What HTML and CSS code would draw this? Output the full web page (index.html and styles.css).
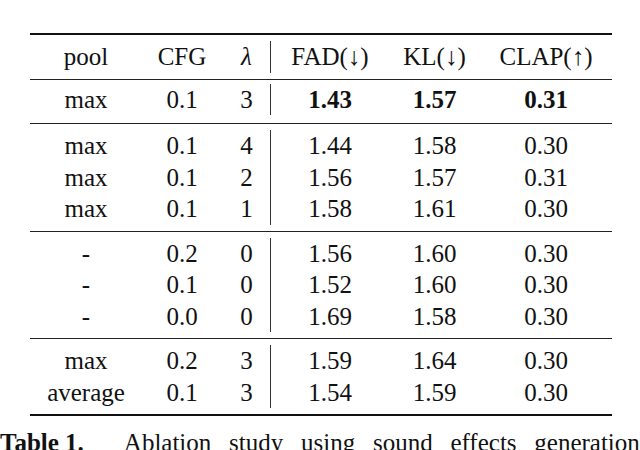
FILE: index.html
```html
<!DOCTYPE html>
<html lang="en">
<head>
    <meta charset="UTF-8">
    <meta name="viewport" content="width=device-width, initial-scale=1.0">
    <title>Table 1 - Ablation study</title>
    <link rel="stylesheet" href="styles.css">
</head>
<body>
    <div class="lead"><span>the sound FAD and KL scores.</span></div>

    <table class="results">
        <colgroup>
            <col class="c-pool">
            <col class="c-cfg">
            <col class="c-lambda">
            <col class="c-fad">
            <col class="c-kl">
            <col class="c-clap">
        </colgroup>
        <thead>
            <tr class="first last">
                <th>pool</th>
                <th>CFG</th>
                <th class="sep"><i>λ</i></th>
                <th>FAD(↓)</th>
                <th>KL(↓)</th>
                <th>CLAP(↑)</th>
            </tr>
        </thead>
        <tbody>
            <tr class="first last">
                <td>max</td><td>0.1</td><td class="sep">3</td>
                <td><b>1.43</b></td><td><b>1.57</b></td><td><b>0.31</b></td>
            </tr>
        </tbody>
        <tbody>
            <tr class="first">
                <td>max</td><td>0.1</td><td class="sep">4</td>
                <td>1.44</td><td>1.58</td><td>0.30</td>
            </tr>
            <tr>
                <td>max</td><td>0.1</td><td class="sep">2</td>
                <td>1.56</td><td>1.57</td><td>0.31</td>
            </tr>
            <tr class="last">
                <td>max</td><td>0.1</td><td class="sep">1</td>
                <td>1.58</td><td>1.61</td><td>0.30</td>
            </tr>
        </tbody>
        <tbody>
            <tr class="first">
                <td>-</td><td>0.2</td><td class="sep">0</td>
                <td>1.56</td><td>1.60</td><td>0.30</td>
            </tr>
            <tr>
                <td>-</td><td>0.1</td><td class="sep">0</td>
                <td>1.52</td><td>1.60</td><td>0.30</td>
            </tr>
            <tr class="last">
                <td>-</td><td>0.0</td><td class="sep">0</td>
                <td>1.69</td><td>1.58</td><td>0.30</td>
            </tr>
        </tbody>
        <tbody class="end">
            <tr class="first">
                <td>max</td><td>0.2</td><td class="sep">3</td>
                <td>1.59</td><td>1.64</td><td>0.30</td>
            </tr>
            <tr class="last">
                <td>average</td><td>0.1</td><td class="sep">3</td>
                <td>1.54</td><td>1.59</td><td>0.30</td>
            </tr>
        </tbody>
    </table>

    <p class="caption"><b>Table 1.</b><span class="gap"></span>Ablation study using sound effects generation</p>
</body>
</html>
```

FILE: styles.css
```css
html, body {
    background: #fff;
}
body {
    margin: 0;
    overflow: hidden;
    font-family: "Liberation Serif", "Times New Roman", serif;
    font-size: 25px;
    color: #111;
}
.lead {
    width: 266px;
    height: 30px;
    line-height: 30px;
    margin-top: -25px;
    display: flex;
    justify-content: flex-end;
    white-space: nowrap;
}
.results {
    margin: 28px 0 0 30px;
    width: 582px;
    table-layout: fixed;
    border-collapse: collapse;
    border-top: 2px solid #111;
    border-bottom: 2px solid #111;
}
.c-pool { width: 112px; }
.c-cfg { width: 80px; }
.c-lambda { width: 49px; }
.c-fad { width: 118px; }
.c-kl { width: 91px; }
.c-clap { width: 132px; }

.results th,
.results td {
    padding: 0;
    text-align: center;
    font-weight: normal;
    line-height: 31.5px;
    white-space: nowrap;
}
.results tr.first th,
.results tr.first td {
    padding-top: 6px;
}
.results tr.last th,
.results tr.last td {
    padding-bottom: 6px;
}
.results tbody:first-of-type tr.first td {
    padding-top: 4px;
    padding-bottom: 8px;
}
.results thead,
.results tbody {
    border-bottom: 1px solid #222;
}
.results tbody.end {
    border-bottom: none;
}
.results .sep {
    background: linear-gradient(#333, #333) right top / 1px 100% no-repeat;
    background-origin: content-box;
    background-clip: content-box;
}
.results b {
    font-weight: bold;
}
.caption {
    margin: 12px 0 0;
    line-height: 30px;
    white-space: nowrap;
    word-spacing: 11.5px;
}
.caption b {
    word-spacing: 0;
}
.caption .gap {
    display: inline-block;
    width: 40px;
}
```
